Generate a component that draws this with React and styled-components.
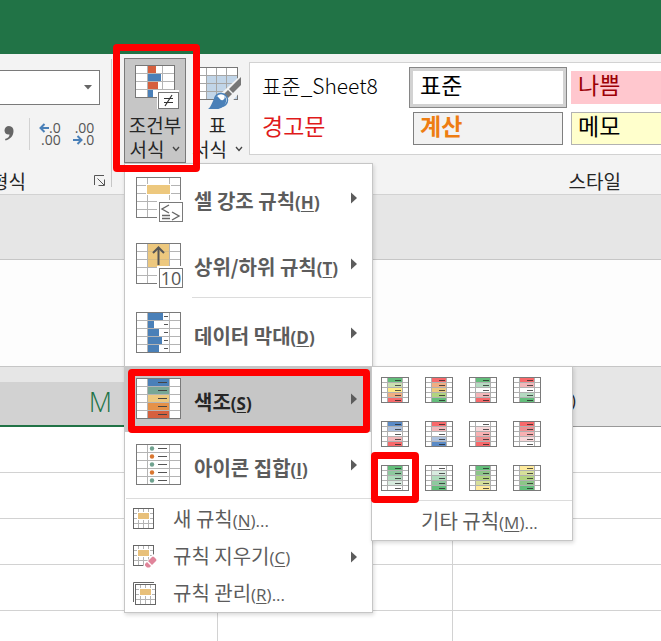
import React from 'react'
import styled, { createGlobalStyle, css } from 'styled-components';


const bigGridRows = [8, 16, 24, 32];

// cuadricula base de 45x41 que usan los iconos grandes
const GridBase = () => (
  <>
    <rect x="0.5" y="0.5" width="44" height="40" fill="#fff" />
    <path d={bigGridRows.map((y) => `M1 ${y + 0.5}H44`).join('') + 'M11.5 1V40M33.5 1V40'} stroke="#b4b4b4" />
    <rect x="0.5" y="0.5" width="44" height="40" fill="none" stroke="#7a7a7a" />
  </>
);

const Badge = ({ children }) => (
  <g>
    <rect x="21" y="23" width="27" height="23" fill="#fff" />
    <rect x="23.5" y="25.5" width="23" height="19" fill="#fff" stroke="#7a7a7a" />
    {children}
  </g>
);

const HighlightIcon = () => (
  <svg width="48" height="46" aria-hidden="true">
    <GridBase />
    <rect x="10" y="7" width="25" height="11" fill="#fff" />
    <rect x="11" y="8" width="23" height="9" fill="#edc87e" />
    <Badge>
      <path d="M33 28L26 32L33 36M26 38.5H34M36 35L43 39L36 43M26 41.5H34" fill="none" stroke="#666" strokeWidth="1.4" />
    </Badge>
  </svg>
);

const TopIcon = () => (
  <svg width="48" height="46" aria-hidden="true">
    <GridBase />
    <rect x="12" y="1" width="21" height="23" fill="#edc87e" />
    <path d="M12 8.5H33M12 16.5H33" stroke="#d9bd84" />
    <path d="M22.5 22V5M17 10L22.5 4.5L28 10" fill="none" stroke="#555" strokeWidth="2" />
    <Badge>
      <BadgeText x="35" y="42" textAnchor="middle">10</BadgeText>
    </Badge>
  </svg>
);

const DataBarIcon = () => (
  <svg width="48" height="46" aria-hidden="true">
    <GridBase />
    {[15, 6, 11, 14, 11].map((w, i) => (
      <g key={i}>
        <rect x="12" y={1 + i * 8} width={w} height="7" fill="#4a80b8" />
        <path d={`M28 ${4.5 + i * 8}H32`} stroke="#555" />
      </g>
    ))}
  </svg>
);

const ColorScaleIcon = () => (
  <svg width="48" height="46" aria-hidden="true">
    <GridBase />
    {['#4a80b8', '#78a796', '#edc87e', '#e59148', '#d6603e'].map((c, i) => (
      <g key={c}>
        <rect x="12" y={1 + i * 8} width="21" height="7" fill={c} />
        <path d={`M22 ${4.5 + i * 8}H31`} stroke="#444" />
      </g>
    ))}
  </svg>
);

const IconSetIcon = () => (
  <svg width="48" height="46" aria-hidden="true">
    <GridBase />
    {['#6fa28f', '#d9762f', '#6fa28f', '#d9762f', '#6fa28f'].map((c, i) => (
      <g key={i}>
        <circle cx="16" cy={4.5 + i * 8} r="2.2" fill={c} />
        <path d={`M22 ${4.5 + i * 8}H31`} stroke="#555" />
      </g>
    ))}
  </svg>
);

const RuleBase = () => (
  <>
    <rect x="0.5" y="0.5" width="20" height="20" fill="#fff" />
    <path d="M5.5 1V20M15.5 1V20M10.5 1V20M1 5.5H20M1 10.5H20M1 15.5H20" stroke="#b4b4b4" />
    <rect x="0.5" y="0.5" width="20" height="20" fill="none" stroke="#666" />
    <rect x="4" y="4" width="13" height="8" fill="#fff" />
    <rect x="5" y="5" width="11" height="6" fill="#e8c07a" />
  </>
);

const NewRuleIcon = () => (
  <svg width="24" height="24" aria-hidden="true"><RuleBase /></svg>
);

const ClearRuleIcon = () => (
  <svg width="24" height="24" aria-hidden="true">
    <RuleBase />
    <path d="M10 21L20 9L25 13V24H10Z" fill="#fff" />
    <path d="M15 16L19 12Q20 11 21 12L23 14Q24 15 23 16L19 20Z" fill="#e0849a" />
    <path d="M14 17L18 21L16.5 22.5H14L12 20.5V19Z" fill="#e0849a" />
  </svg>
);

const ManageRuleIcon = () => (
  <svg width="24" height="24" aria-hidden="true">
    <path d="M0.5 20V0.5H21" fill="none" stroke="#666" />
    <g transform="translate(2 2)"><RuleBase /></g>
  </svg>
);

const ConditionalIcon = () => (
  <svg width="44" height="44" aria-hidden="true">
    <rect x="0.5" y="0.5" width="39" height="32" fill="#fff" />
    <path d="M12.5 1V32M27.5 1V32M1 8.5H39M1 16.5H39M1 24.5H39" stroke="#b4b4b4" />
    <rect x="0.5" y="0.5" width="39" height="32" fill="none" stroke="#777" />
    <rect x="13" y="1" width="8" height="7" fill="#d6603e" />
    <rect x="13" y="9" width="13" height="7" fill="#4a80b8" />
    <rect x="13" y="17" width="10" height="7" fill="#d6603e" />
    <rect x="13" y="25" width="5" height="7" fill="#4a80b8" />
    <rect x="22" y="25" width="22" height="19" fill="#fff" />
    <rect x="23.5" y="27.5" width="20" height="16" fill="#fff" stroke="#777" />
    <path d="M29 33.5H38M29 37.5H38M37 30L30 41" stroke="#333" strokeWidth="1.2" />
  </svg>
);

const TableIcon = () => (
  <svg width="46" height="44" aria-hidden="true">
    <rect x="0.5" y="2.5" width="42" height="32" fill="#fff" />
    <rect x="12" y="11" width="30" height="23" fill="#c1d5e8" />
    <path d="M11.5 3V34M21.5 3V34M31.5 3V34M1 10.5H42M1 18.5H42M1 26.5H42" stroke="#a6a6a6" />
    <rect x="0.5" y="2.5" width="42" height="32" fill="none" stroke="#777" />
    <path d="M46 10L20 34L34 40L46 26Z" fill="#f3f3f3" />
    <path d="M46 12V20L38 28L34 24Z" fill="#777" />
    <path d="M33 25L37 29L33 33L29 29Z" fill="#777" />
    <circle cx="26" cy="35" r="6.5" fill="#fff" stroke="#4a80b8" strokeWidth="1.5" />
    <path d="M13 44C17 42 17 34 22 31C25 33 25 36 28 35C30 34 30 32 29 31C34 34 30 44 22 44Z" fill="#4a80b8" />
  </svg>
);

const Chevron = () => (
  <svg width="8" height="8" aria-hidden="true">
    <path d="M1 2L4 5.5L7 2" fill="none" stroke="#444" strokeWidth="1.3" />
  </svg>
);

const Arrow = () => (
  <svg width="6" height="12" aria-hidden="true">
    <path d="M0 0.5L6 6L0 11.5Z" fill="#5c5c5c" />
  </svg>
);

const CommaIcon = () => (
  <svg width="10" height="16" aria-hidden="true">
    <path d="M5 0C8 0 9.5 2.2 9.5 5C9.5 10 6 13.5 1.5 14.5L1 13C4 12 5.5 10.5 5.5 8.5C2.5 9 0.5 7 0.5 4.5C0.5 2 2.5 0 5 0Z" fill="#666" />
  </svg>
);

const DecimalArrow = ({ right }) => (
  <svg width="10" height="10" aria-hidden="true">
    <path d={right ? 'M0 5H8M4.5 1L8.5 5L4.5 9' : 'M10 5H2M5.5 1L1.5 5L5.5 9'} fill="none" stroke="#4a80b8" strokeWidth="2" />
  </svg>
);

const LauncherIcon = () => (
  <svg width="12" height="12" aria-hidden="true">
    <path d="M0.5 10V0.5H10M3.5 3.5L10 10M10.5 4.5V10.5H4.5" fill="none" stroke="#555" />
  </svg>
);

const Swatch = ({ colors }) => (
  <svg width="28" height="26" aria-hidden="true">
    <rect x="0.5" y="0.5" width="27" height="25" fill="#fff" />
    <path d="M1 5.5H27M1 10.5H27M1 15.5H27M1 20.5H27M6.5 1V25M21.5 1V25" stroke="#b0b0b0" />
    {colors.map((c, i) => (
      <g key={i}>
        <rect x="7" y={1 + i * 5} width="14" height="4" fill={c} />
        <path d={`M14 ${3.5 + i * 5}H20`} stroke="#222" strokeOpacity="0.75" />
      </g>
    ))}
    <rect x="0.5" y="0.5" width="27" height="25" fill="none" stroke="#7a7a7a" />
  </svg>
);

const G = '#63be7b';
const R = '#f8696b';
const B = '#5a8ac6';
const W = '#ffffff';

const scales = [
  { name: '녹색 - 노랑 - 빨강', colors: [G, '#cbdfb0', '#ffeb84', '#f0ad82', R] },
  { name: '빨강 - 노랑 - 녹색', colors: [R, '#f0ad82', '#edc87e', '#b1d480', G] },
  { name: '녹색 - 흰색 - 빨강', colors: [G, '#b4dac0', W, '#f3b6b9', R] },
  { name: '빨강 - 흰색 - 녹색', colors: [R, '#f3b6b9', W, '#b4dac0', G] },
  { name: '파랑 - 흰색 - 빨강', colors: [B, '#adc1de', W, '#f3b6b9', R] },
  { name: '빨강 - 흰색 - 파랑', colors: [R, '#f3b6b9', W, '#adc1de', B] },
  { name: '흰색 - 빨강', colors: [W, '#f8d8da', '#f8b0b2', '#ee9092', R] },
  { name: '빨강 - 흰색', colors: [R, '#ee9092', '#f8b0b2', '#f8d8da', W] },
  { name: '녹색 - 흰색', colors: [G, '#8dc99e', '#aedcbc', '#d8ebdf', W], marked: true },
  { name: '흰색 - 녹색', colors: [W, '#d8ebdf', '#aedcbc', '#8dc99e', G] },
  { name: '녹색 - 노랑', colors: [G, '#8cc688', '#b1d480', '#d6e09a', '#ffeb9c'] },
  { name: '노랑 - 녹색', colors: ['#ffeb9c', '#d6e09a', '#b1d480', '#8cc688', G] },
];

const Item = ({ icon, text, letter, dots, arrow, big, active, children }) => (
  <ItemBox>
    <ItemButton type="button" role="menuitem" $big={big} $active={active}>
      {icon}
      <Label $big={big}>
        {text}<Key>(<u>{letter}</u>){dots && '...'}</Key>
      </Label>
      {arrow && <Arrow />}
    </ItemButton>
    {children}
  </ItemBox>
);

const App = () => {
  return (
    <Page>
      <GlobalStyle />
      <TitleBar />
      <Ribbon>
        <NumberGroup>
          <NumberBody>
            <SelectBox>
              <Select aria-label="표시 형식"><option></option></Select>
              <svg width="8" height="5" aria-hidden="true"><path d="M0 0H8L4 4.5Z" fill="#666" /></svg>
            </SelectBox>
            <Tools>
              <Tool type="button" aria-label="쉼표 스타일"><CommaIcon /></Tool>
              <ToolLine />
              <Tool type="button" aria-label="자릿수 늘림">
                <span><DecimalArrow />.0</span>
                <span>.00</span>
              </Tool>
              <Tool type="button" aria-label="자릿수 줄임">
                <span>.00</span>
                <span><DecimalArrow right />.0</span>
              </Tool>
            </Tools>
          </NumberBody>
          <GroupFooter>
            <ClippedName>형식</ClippedName>
            <Tool type="button" aria-label="표시 형식 설정"><LauncherIcon /></Tool>
          </GroupFooter>
        </NumberGroup>
        <GroupLine />
        <StyleGroup>
          <StyleBody>
            <Dropdown>
              <BigButton type="button" $open aria-haspopup="menu" aria-expanded="true">
                <ConditionalIcon />
                <span>조건부</span>
                <span>서식 <Chevron /></span>
              </BigButton>
              <Menu role="menu">
                <Item big arrow icon={<HighlightIcon />} text="셀 강조 규칙" letter="H" />
                <Item big arrow icon={<TopIcon />} text="상위/하위 규칙" letter="T" />
                <Line $inset />
                <Item big arrow icon={<DataBarIcon />} text="데이터 막대" letter="D" />
                <Item big arrow active icon={<ColorScaleIcon />} text="색조" letter="S">
                  <SubMenu role="menu">
                    <Swatches>
                      {scales.map((s) => (
                        <SwatchButton key={s.name} type="button" role="menuitem" aria-label={s.name}>
                          <Swatch colors={s.colors} />
                          {s.marked && <SwatchMark />}
                        </SwatchButton>
                      ))}
                    </Swatches>
                    <MoreButton type="button" role="menuitem">
                      기타 규칙<Key>(<u>M</u>)...</Key>
                    </MoreButton>
                  </SubMenu>
                  <ItemMark />
                </Item>
                <Item big arrow icon={<IconSetIcon />} text="아이콘 집합" letter="I" />
                <Line />
                <Item dots icon={<NewRuleIcon />} text="새 규칙" letter="N" />
                <Item arrow icon={<ClearRuleIcon />} text="규칙 지우기" letter="C" />
                <Item dots icon={<ManageRuleIcon />} text="규칙 관리" letter="R" />
              </Menu>
              <ButtonMark />
            </Dropdown>
            <BigButton type="button">
              <TableIcon />
              <span>표</span>
              <span>서식 <Chevron /></span>
            </BigButton>
            <Gallery>
              <StyleCell type="button" $thin>표준_Sheet8</StyleCell>
              <StyleCell type="button" $selected>표준</StyleCell>
              <StyleCell type="button" $bg="#ffc7ce" $color="#9c0006">나쁨</StyleCell>
              <StyleCell type="button" $color="#e01b1b">경고문</StyleCell>
              <StyleCell type="button" $bg="#f2f2f2" $color="#ee7d12" $line="#7f7f7f" $bold>계산</StyleCell>
              <StyleCell type="button" $bg="#ffffcc" $line="#b2b2b2">메모</StyleCell>
            </Gallery>
          </StyleBody>
          <GroupFooter $end><GroupName>스타일</GroupName></GroupFooter>
        </StyleGroup>
      </Ribbon>
      <Gap />
      <FormulaBar aria-label="수식 입력줄" />
      <SheetArea>
        <Sheet>
          <thead>
            <tr>
              <HeadCell $selected scope="col">M</HeadCell>
              <HeadCell scope="col">N</HeadCell>
              <HeadCell scope="col">O</HeadCell>
            </tr>
          </thead>
          <tbody>
            {[1, 2, 3, 4, 5].map((r) => (
              <tr key={r}><Cell /><Cell /><Cell /></tr>
            ))}
          </tbody>
        </Sheet>
      </SheetArea>
    </Page>
  )
}

export default App

const GlobalStyle = createGlobalStyle`
*{
  box-sizing: border-box;
}
body{
  margin:0;
  background:#fff;
  font-family: 'Noto Sans CJK KR', 'Noto Sans', sans-serif;
  color:#262626;
}
button, select, input{
  font-family: inherit;
  color: inherit;
  margin:0;
}
svg{
  display:block;
  flex:none;
}
`

const Page = styled.div`
width:100%;
height:100vh;
overflow:hidden;
display:flex;
flex-direction: column;
`;

const TitleBar = styled.header`
height:54px;
flex:none;
background:#217346;
`;

const Ribbon = styled.div`
flex:none;
display:flex;
padding-top:4px;
background:#f3f3f3;
border-bottom:1px solid #d2d2d2;
`;

const NumberGroup = styled.section`
width:111px;
flex:none;
`;

const GroupLine = styled.div`
width:1px;
flex:none;
margin:1px 0 7px;
background:#c6c6c6;
`;

const NumberBody = styled.div`
height:105px;
padding:12px 11px 0 0;
`;

const SelectBox = styled.div`
display:grid;
align-items: center;
svg{
  grid-area: 1 / 1;
  justify-self: end;
  margin-right:8px;
  pointer-events: none;
}
`;

const Select = styled.select`
grid-area: 1 / 1;
width:100%;
height:35px;
appearance: none;
background:#fff;
border:1px solid #7a7a7a;
border-left:0;
border-radius:0;
`;

const Tools = styled.div`
display:flex;
align-items: center;
height:32px;
margin-top:13px;
padding-left:4px;
`;

const Tool = styled.button`
flex:none;
padding:0;
border:0;
background:none;
font-family: 'Open Sans', sans-serif;
font-size:14px;
line-height:12px;
color:#555;
span{
  display:flex;
  justify-content: flex-end;
  align-items: center;
}
& + &{
  margin-left:12px;
}
`;

const ToolLine = styled.div`
width:1px;
height:32px;
margin:0 9px 0 15px;
background:#d2d2d2;
`;

const GroupFooter = styled.div`
height:31px;
display:flex;
align-items: center;
justify-content: ${(p) => (p.$end ? 'flex-end' : 'space-between')};
padding:4px ${(p) => (p.$end ? 40 : 5)}px 0 0;
`;

const GroupName = styled.div`
font-size:19px;
line-height:24px;
white-space: nowrap;
`;

const ClippedName = styled(GroupName)`
width:26px;
display:flex;
justify-content: flex-end;
`;

const StyleGroup = styled.section`
flex:1;
min-width:0;
padding-left:12px;
`;

const StyleBody = styled.div`
display:flex;
gap:2px;
`;

const Dropdown = styled.div`
position:relative;
z-index:1;
`;

const BigButton = styled.button`
width:${(p) => (p.$open ? 62 : 59)}px;
height:105px;
flex:none;
display:flex;
flex-direction: column;
align-items: center;
padding:6px 0 0;
border:1px solid ${(p) => (p.$open ? '#7a7a7a' : 'transparent')};
background:${(p) => (p.$open ? '#c6c6c6' : 'none')};
font-size:19px;
line-height:24px;
white-space: nowrap;
> svg{
  margin:0 0 4px ${(p) => (p.$open ? 4 : 0)}px;
}
span{
  display:flex;
  align-items: center;
  gap:8px;
}
`;

const BadgeText = styled.text`
font-family: 'Open Sans', sans-serif;
font-size:18px;
fill:#555;
`;

const mark = css`
position:absolute;
border:7px solid #fe0000;
border-radius:4px;
pointer-events: none;
`;

const ButtonMark = styled.div`
${mark}
top:-14px;
left:-11px;
right:-14px;
bottom:-9px;
z-index:2;
`;

const Menu = styled.div`
position:absolute;
top:100%;
left:0;
width:249px;
padding-top:1px;
background:#fff;
border:1px solid #c6c6c6;
box-shadow:1px 2px 4px rgba(0, 0, 0, 0.15);
`;

const ItemBox = styled.div`
position:relative;
`;

const ItemButton = styled.button`
width:100%;
height:${(p) => (p.$big ? 66 : 37)}px;
display:flex;
align-items: center;
gap:${(p) => (p.$big ? 10 : 16)}px;
padding:0 15px 0 ${(p) => (p.$big ? 11 : 8)}px;
border:0;
background:${(p) => (p.$active ? '#c6c6c6' : 'none')};
color:${(p) => (p.$active ? '#262626' : '#5c5c5c')};
text-align: left;
svg:first-child{
  margin-top:${(p) => (p.$big ? 4 : 0)}px;
}
`;

const Label = styled.span`
flex:1;
padding-top:${(p) => (p.$big ? 8 : 0)}px;
font-size:20px;
font-weight:${(p) => (p.$big ? 700 : 400)};
line-height:28px;
white-space: nowrap;
`;

const Key = styled.span`
font-family: 'Open Sans', sans-serif;
font-size:17px;
u{
  text-underline-offset:2px;
  text-decoration-thickness:1px;
}
`;

const Line = styled.div`
height:3px;
margin-left:${(p) => (p.$inset ? 67 : 1)}px;
margin-right:1px;
border-top:1px solid #dcdcdc;
`;

const ItemMark = styled.div`
${mark}
top:3px;
left:3px;
right:2px;
bottom:-1px;
`;

const SubMenu = styled.div`
position:absolute;
top:0;
left:calc(100% - 1px);
width:202px;
background:#fff;
border:1px solid #c6c6c6;
box-shadow:1px 2px 4px rgba(0, 0, 0, 0.15);
`;

const Swatches = styled.div`
display:grid;
grid-template-columns: repeat(4, 44px);
padding:1px 1px 0;
`;

const SwatchButton = styled.button`
position:relative;
height:44px;
display:flex;
align-items: center;
justify-content: center;
padding:0;
border:0;
background:none;
`;

const SwatchMark = styled.div`
${mark}
top:-4px;
left:-2px;
right:-2px;
bottom:-3px;
z-index:1;
`;

const MoreButton = styled.button`
width:100%;
height:40px;
padding:2px 0 0 49px;
border:0;
border-top:1px solid #dcdcdc;
background:none;
font-size:20px;
line-height:28px;
color:#5c5c5c;
text-align: left;
white-space: nowrap;
`;

const Gallery = styled.div`
flex:1;
min-width:0;
height:93px;
overflow:hidden;
display:grid;
grid-template-columns: repeat(3, 150px);
grid-auto-rows: 33px;
gap:8px;
margin-top:4px;
padding:8px 5px;
background:#fff;
border:1px solid #d2d2d2;
border-right:0;
`;

const StyleCell = styled.button`
display:flex;
align-items: center;
padding:0 0 ${(p) => (p.$thin ? 6 : 7)}px 6px;
border:1px solid ${(p) => p.$line || 'transparent'};
background:${(p) => p.$bg || '#fff'};
color:${(p) => p.$color || '#000'};
font-size:${(p) => (p.$thin ? 21 : 23)}px;
font-weight:${(p) => (p.$bold ? 700 : p.$thin ? 300 : 400)};
line-height:28px;
white-space: nowrap;
${(p) => p.$selected && css`
  box-shadow:0 0 0 3px #d2d2d2, 0 0 0 4px #868686;
`}
`;

const Gap = styled.div`
height:65px;
flex:none;
background:#e6e6e6;
border-bottom:1px solid #c6c6c6;
`;

const FormulaBar = styled.input`
width:100%;
height:107px;
flex:none;
border:0;
border-bottom:1px solid #c6c6c6;
background:#fdfdfd;
`;

const SheetArea = styled.main`
flex:1;
min-height:0;
overflow:hidden;
padding-top:15px;
background:linear-gradient(#e6e6e6 15px, #fff 15px);
`;

const Sheet = styled.table`
width:705px;
margin-left:-17px;
table-layout: fixed;
border-collapse: separate;
border-spacing:0;
`;

const HeadCell = styled.th`
height:45px;
padding:0 ${(p) => (p.$selected ? 0 : 8)}px 4px 0;
background:${(p) => (p.$selected ? '#d2d2d2' : '#e6e6e6')};
border-bottom:${(p) => (p.$selected ? '2px solid #217346' : '1px solid #999')};
color:${(p) => (p.$selected ? '#217346' : '#262626')};
font-family: 'Open Sans', 'Noto Sans', sans-serif;
font-size:27px;
font-weight:300;
line-height:36px;
`;

const Cell = styled.td`
height:46px;
padding:0;
border-right:1px solid #d2d2d2;
border-bottom:1px solid #d2d2d2;
`;
